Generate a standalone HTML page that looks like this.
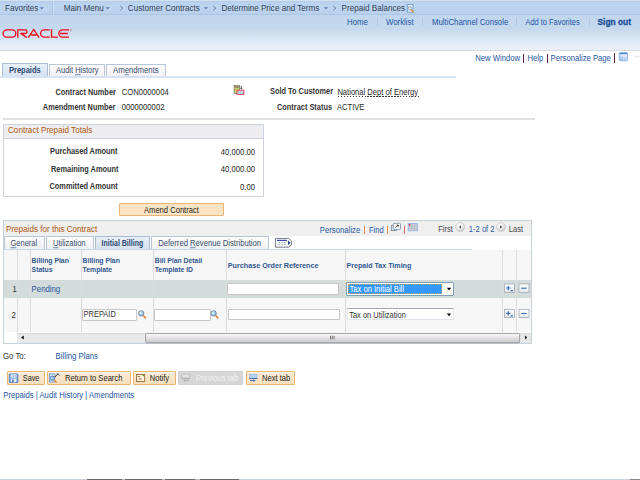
<!DOCTYPE html>
<html><head><meta charset="utf-8">
<style>
html,body{margin:0;padding:0;width:640px;height:480px;overflow:hidden;background:#fff;}
body{font-family:"Liberation Sans",sans-serif;font-size:7.5px;color:#333;position:relative;}
.a{position:absolute;white-space:nowrap;line-height:1;transform:scaleY(1.15);transform-origin:0 84.6%;}.gh{transform:none;}
.b{font-weight:bold;}
u{text-decoration-color:#8194b4;text-decoration-thickness:0.7px;text-underline-offset:1px;}
#topbar{position:absolute;left:0;top:0;width:640px;height:16px;background:linear-gradient(#d3e2f2 0,#d3e2f2 1px,#b4cce8 1px,#b4cce8 2px,#bad2ee 2px,#bdd5ef 7px,#b9d1ec 14px,#abc5e4 14px,#abc5e4 15.5px,#c2d6ee 15.5px,#c2d6ee 16px);}
#hdr{position:absolute;left:0;top:16px;width:640px;height:35px;background:linear-gradient(#c2d6ee 0,#c4d8ee 34%,#cddcee 45%,#d6e4f4 62%,#e2ebf6 80%,#ecf2f9 100%);}
#hdrline{position:absolute;left:0;top:50px;width:640px;height:1px;background:#d6dbe1;}
.bc{color:#33435a;font-size:8.1px;}
.sep{position:absolute;width:1px;background:#a9c0dc;}
.arr{position:absolute;width:0;height:0;border-left:2.5px solid transparent;border-right:2.5px solid transparent;border-top:3px solid #6d8fb6;}
.hl{color:#1d56a4;font-size:7.8px;}
.lnk{color:#2457a2;}
.tab{position:absolute;box-sizing:border-box;border:1px solid #b9c6d6;border-bottom:none;background:linear-gradient(#fdfdfd,#eef0f3);}
.tabon{background:linear-gradient(#e8eff8,#d6e2f0);border-color:#a9bcd2;}
.lbl{color:#333;font-weight:bold;font-size:7.4px;}
.val{color:#262626;font-size:7.6px;}
.gh{color:#31588f;font-weight:bold;font-size:6.85px;line-height:8.8px;}
.vline{position:absolute;width:1px;background:#dcdcdc;}
.inp{position:absolute;box-sizing:border-box;border:1px solid #c6c6c6;background:#fff;border-radius:1px;}
.btn{position:absolute;box-sizing:border-box;border:1px solid #e6b66e;background:linear-gradient(#fdf5ea 0,#fdf5ea 1px,#faead4 1px,#f6dfbd 100%);border-radius:1px;}
</style></head><body>

<!-- top breadcrumb bar -->
<div id="topbar"></div>
<div class="a bc" style="left:5px;top:5.2px;">Favorites</div>
<div class="sep" style="left:52px;top:1px;height:14px;background:#a8bfdc;box-shadow:1px 0 0 #d3e2f3;"></div>
<div class="a bc" style="left:63.8px;top:5.2px;">Main Menu</div>
<div class="a bc" style="left:127.8px;top:5.2px;">Customer Contracts</div>
<div class="a bc" style="left:221.4px;top:5.2px;">Determine Price and Terms</div>
<div class="a bc" style="left:341.6px;top:5.2px;">Prepaid Balances</div>
<svg style="position:absolute;left:0;top:0" width="640" height="16">
<g fill="#5f86b8"><path d="M39.5,7.2 H44 L41.75,9.6 Z"/><path d="M105.5,7.2 H110 L107.75,9.6 Z"/><path d="M203.6,7.2 H208.1 L205.85,9.6 Z"/><path d="M323.6,7.2 H328.1 L325.85,9.6 Z"/></g>
<g fill="none" stroke="#5a6f93" stroke-width="0.9"><path d="M120.3,6 L122.6,8.15 L120.3,10.3"/><path d="M213.4,6 L215.8,8.15 L213.4,10.3"/><path d="M333.4,6 L335.8,8.15 L333.4,10.3"/></g>
<rect x="407.3" y="4.5" width="5.6" height="7.6" fill="#f4f7fb" stroke="#6c98cc" stroke-width="0.9"/>
<circle cx="409.8" cy="8.3" r="1.6" fill="none" stroke="#7a8aa0" stroke-width="0.9"/>
<path d="M411,9.6 L413.6,12.4" stroke="#e08a28" stroke-width="1.3"/>
</svg>

<!-- header -->
<div id="hdr"></div>
<div id="hdrline"></div>
<svg style="position:absolute;left:0;top:0" width="80" height="45" viewBox="0 0 80 45"><g fill="none" stroke="#ec0a1a" stroke-width="1.35" stroke-linecap="butt">
<path d="M6.7,29.9 H12.2 A3.6,3.6 0 0 1 12.2,37.1 H6.7 A3.6,3.6 0 0 1 6.7,29.9 Z"/>
<path d="M17.8,37.7 V29.9 H25.2 A1.8,1.8 0 0 1 25.2,33.5 H20.3 M21,33.6 L26.9,37.5"/>
<path d="M28.3,37.7 L33.7,29.5 L39.1,37.7 M31.2,35 H36.8"/>
<path d="M49.75,29.9 H44.2 A3.6,3.6 0 0 0 44.2,37.1 H49.75"/>
<path d="M51.5,29.3 V37.1 H57.75"/>
<path d="M69,29.9 H62.45 A3.6,3.6 0 0 0 62.45,37.1 H69 M60,33.5 H67.75"/>
</g><circle cx="70.6" cy="30" r="0.8" fill="none" stroke="#ee6066" stroke-width="0.5"/></svg>
<div class="a hl" style="left:347px;top:18.5px;">Home</div>
<div class="sep" style="left:377px;top:18px;height:8px;background:#b3c7de;"></div>
<div class="a hl" style="left:386px;top:18.5px;">Worklist</div>
<div class="sep" style="left:422px;top:18px;height:8px;background:#b3c7de;"></div>
<div class="a hl" style="left:432px;top:18.5px;">MultiChannel Console</div>
<div class="sep" style="left:516px;top:18px;height:8px;background:#b3c7de;"></div>
<div class="a hl" style="left:525.5px;top:18.5px;font-size:7.45px;">Add to Favorites</div>
<div class="sep" style="left:589px;top:18px;height:8px;background:#b3c7de;"></div>
<div class="a hl b" style="left:597.5px;top:18.3px;font-size:8.4px;color:#184a96;-webkit-text-stroke:0.25px #184a96;">Sign out</div>

<!-- page links -->
<div class="a lnk" style="left:475.3px;top:55px;font-size:7.7px;">New Window</div>
<div class="sep" style="left:523.2px;top:53.5px;height:9px;width:1.2px;background:#5e1f48;"></div>
<div class="a lnk" style="left:527.5px;top:55px;font-size:7.7px;">Help</div>
<div class="sep" style="left:546.5px;top:53.5px;height:9px;width:1.2px;background:#5e1f48;"></div>
<div class="a lnk" style="left:550.6px;top:55px;font-size:7.7px;">Personalize Page</div>
<div class="sep" style="left:613.8px;top:52.8px;height:9.8px;width:1.3px;background:#5e1f48;"></div>
<svg style="position:absolute;left:610px;top:48px" width="30" height="18" viewBox="610 48 30 18">
<rect x="619.2" y="52.6" width="8.2" height="8.2" rx="0.9" fill="#e2ecfb" stroke="#7ea6e6" stroke-width="0.8"/>
<rect x="619.4" y="52.9" width="7.8" height="1.2" fill="#4a7fdc"/>
<path d="M620.3,55.2 V60.3 M622.2,56.3 V60.3 M619.6,57.8 H626.8 M619.6,59.5 H626.8" stroke="#86aee8" stroke-width="0.6"/>
<path d="M635.2,56.3 H639.5 M635.4,56.3 V57.3" stroke="#c8c8c8" stroke-width="0.6"/>
</svg>

<!-- tabs -->
<div class="tab tabon" style="left:2px;top:63px;width:45.5px;height:13.5px;"></div>
<div class="a b" style="left:9px;top:66.8px;color:#2c4a72;font-size:7.5px;">Prepaids</div>
<div class="tab" style="left:49px;top:64px;width:56px;height:13px;"></div>
<div class="a" style="left:56px;top:66.5px;color:#3b4f6a;">Audit <u>H</u>istory</div>
<div class="tab" style="left:106px;top:64px;width:59.5px;height:13px;"></div>
<div class="a" style="left:113px;top:66.5px;color:#3b4f6a;font-size:7.75px;">Am<u>e</u>ndments</div>
<div style="position:absolute;left:0;top:76px;width:456px;height:1.5px;background:#d8e3f1;"></div>

<!-- contract info -->
<div class="a lbl" style="left:55.5px;top:89px;">Contract Number</div>
<div class="a val" style="left:121.7px;top:89px;font-size:7.7px;">CON0000004</div>
<div class="a lbl" style="left:42.8px;top:103.5px;">Amendment Number</div>
<div class="a val" style="left:121.7px;top:103.5px;font-size:7.7px;">0000000002</div>
<div class="a lbl" style="left:270px;top:88px;">Sold To Customer</div>
<div class="a val" style="left:337.4px;top:89px;">National Dept of Energy</div>
<div style="position:absolute;left:337.5px;top:96px;width:81px;height:1px;background:repeating-linear-gradient(to right,#333 0,#333 1.5px,transparent 1.5px,transparent 2.95px);"></div>
<div class="a lbl" style="left:277px;top:103.5px;">Contract Status</div>
<div class="a val" style="left:337px;top:103.5px;">ACTIVE</div>
<svg style="position:absolute;left:230px;top:82px" width="18" height="16" viewBox="230 82 18 16"><rect x="234.1" y="85.4" width="5.5" height="8.1" fill="#c9d06c" stroke="#5a5a50" stroke-width="0.6"/><rect x="235" y="85.6" width="3.8" height="2.4" fill="#9a8e78"/><path d="M241.3,86 V88.6 M240.6,88.2 L241.3,89 L242,88.2" stroke="#222" stroke-width="0.8" fill="none"/><rect x="237" y="90.1" width="6.9" height="4.3" fill="#b8d4dc" stroke="#e23a55" stroke-width="0.9"/></svg>
<div style="position:absolute;left:3px;top:118px;width:532px;height:2px;background:#e2e2e2;"></div>

<!-- totals box -->
<div style="position:absolute;left:3px;top:124px;width:261px;height:73px;box-sizing:border-box;border:1px solid #ccd3dc;"></div>
<div style="position:absolute;left:4px;top:125px;width:259px;height:12.5px;background:#ededef;border-bottom:1px solid #c9d0da;"></div>
<div class="a" style="left:8px;top:127px;color:#b0580f;font-size:8.15px;">Contract Prepaid Totals</div>
<div class="a lbl" style="left:50px;top:148px;">Purchased Amount</div>
<div class="a val" style="right:385px;top:148.5px;font-size:7.7px;">40,000.00</div>
<div class="a lbl" style="left:51px;top:165.5px;">Remaining Amount</div>
<div class="a val" style="right:385px;top:166px;font-size:7.7px;">40,000.00</div>
<div class="a lbl" style="left:49.5px;top:183px;">Committed Amount</div>
<div class="a val" style="right:385px;top:183.5px;font-size:7.7px;">0.00</div>

<div class="btn" style="left:119px;top:203px;width:105px;height:13px;background:#fbe4c3;border-color:#e8b57a;"></div>
<div class="a" style="left:144px;top:206.6px;color:#222;font-size:7.6px;">Amend Contract</div>

<!-- grid -->
<div style="position:absolute;left:3px;top:220px;width:529px;height:124px;box-sizing:border-box;border:1px solid #c9d1db;background:#fff;"></div>
<div style="position:absolute;left:4px;top:221px;width:527px;height:14.5px;background:#efefef;"></div>
<div class="a" style="left:6px;top:226px;color:#b0580f;font-size:8.1px;">Prepaids for this Contract</div>
<div class="a lnk" style="left:319.8px;top:226.5px;font-size:7.75px;">Personalize</div>
<div style="position:absolute;left:364px;top:226px;width:1px;height:7.5px;background:#e08d4a;"></div>
<div class="a lnk" style="left:369px;top:226.5px;font-size:7.5px;">Find</div>
<div style="position:absolute;left:387.3px;top:226px;width:1px;height:7.5px;background:#e08d4a;"></div>
<div style="position:absolute;left:404.2px;top:226px;width:1px;height:7.5px;background:#d86a6a;"></div>
<svg style="position:absolute;left:388px;top:220px" width="34" height="14" viewBox="388 220 34 14">
<rect x="391.3" y="225.8" width="5" height="4.8" fill="#e8edf2" stroke="#6c7f98" stroke-width="0.8"/>
<rect x="393.2" y="223.4" width="7.3" height="6" rx="0.8" fill="#fff" stroke="#6f8aaa" stroke-width="0.8"/>
<path d="M395.5,227.8 L398.3,225 M396.6,225 H398.3 V226.7" stroke="#222" stroke-width="0.8" fill="none"/>
<rect x="408.2" y="223.4" width="9.3" height="7.4" fill="#c8cdd4" stroke="#8fb4e8" stroke-width="0.8"/>
<path d="M408.6,226 H417.2 M408.6,228.3 H417.2 M411.5,223.8 V230.5 M414.5,223.8 V230.5" stroke="#b0b6be" stroke-width="0.5"/>
<circle cx="409.6" cy="224.8" r="0.9" fill="#e8283a"/>
</svg>
<div class="a" style="left:438.2px;top:226.4px;color:#4a4a4a;font-size:7.6px;">First</div>
<div class="a lnk" style="left:468.8px;top:226.4px;font-size:7.6px;color:#2f5d9e;">1-2 of 2</div>
<div class="a" style="left:508.7px;top:226.4px;color:#4a4a4a;font-size:7.6px;">Last</div>
<svg style="position:absolute;left:452px;top:219px" width="58" height="16" viewBox="452 219 58 16">
<defs><radialGradient id="rg" cx="0.4" cy="0.35" r="0.7"><stop offset="0" stop-color="#ffffff"/><stop offset="0.6" stop-color="#e6e6e6"/><stop offset="1" stop-color="#bdbdbd"/></radialGradient></defs>
<circle cx="460.2" cy="227" r="4.5" fill="url(#rg)" stroke="#c4c4c4" stroke-width="0.6"/>
<path d="M458.8,227 L461,225.2 V228.8 Z" fill="#555"/>
<circle cx="500.9" cy="227" r="4.5" fill="url(#rg)" stroke="#c4c4c4" stroke-width="0.6"/>
<path d="M502.3,227 L500.1,225.2 V228.8 Z" fill="#555"/>
</svg>

<!-- grid tabs -->
<div class="tab" style="left:4px;top:236px;width:41px;height:13px;"></div>
<div class="a" style="left:10.5px;top:240px;color:#3b4f6a;"><u>G</u>eneral</div>
<div class="tab" style="left:46px;top:236px;width:47.5px;height:13px;"></div>
<div class="a" style="left:53px;top:240px;color:#3b4f6a;"><u>U</u>tilization</div>
<div class="tab tabon" style="left:94.5px;top:236px;width:55px;height:13px;"></div>
<div class="a b" style="left:101.6px;top:240.2px;color:#2c4a72;font-size:7px;transform:scaleY(1.3);">Initial Billing</div>
<div class="tab" style="left:151px;top:236px;width:117.5px;height:13px;"></div>
<div class="a" style="left:158.2px;top:240px;color:#3b4f6a;font-size:7.65px;">Deferred <u>R</u>evenue Distribution</div>
<svg style="position:absolute;left:272px;top:235px" width="24" height="14" viewBox="272 235 24 14">
<path d="M275.4,238.4 H288.6 L291.5,241 V245 L288.6,247.2 H275.4 Z" fill="#f4f8fc" stroke="#5a5f68" stroke-width="0.8"/>
<rect x="277" y="239.8" width="10" height="1.2" fill="#3f48a8"/>
<g fill="#8aa0b8"><rect x="278.7" y="242" width="1.2" height="0.9"/><rect x="281.5" y="242" width="1.2" height="0.9"/><rect x="284.3" y="242" width="1.2" height="0.9"/><rect x="278.7" y="244.2" width="1.2" height="0.9"/><rect x="281.5" y="244.2" width="1.2" height="0.9"/><rect x="284.3" y="244.2" width="1.2" height="0.9"/></g>
<path d="M288,240.4 L290.4,242.7 L288,245 Z" fill="#23348a"/>
</svg>
<div style="position:absolute;left:4px;top:249px;width:468px;height:1px;background:#c8d8ec;"></div>

<!-- column header row -->
<div style="position:absolute;left:4px;top:250px;width:527px;height:30px;background:#f6f6f6;"></div>
<div class="a gh" style="left:31.6px;top:257.2px;">Billing Plan<br>Status</div>
<div class="a gh" style="left:82.6px;top:257.2px;">Billing Plan<br>Template</div>
<div class="a gh" style="left:154.7px;top:257.2px;">Bill Plan Detail<br>Template ID</div>
<div class="a gh" style="left:227.8px;top:261.8px;font-size:7.2px;">Purchase Order Reference</div>
<div class="a gh" style="left:346.5px;top:261.8px;font-size:7.1px;">Prepaid Tax Timing</div>

<!-- row 1 -->
<div style="position:absolute;left:4px;top:280px;width:527px;height:18px;background:#d3dbdb;"></div>
<div class="a" style="left:12.5px;top:286px;color:#333;">1</div>
<div class="a lnk" style="left:31.6px;top:285.7px;font-size:7.8px;color:#2a58a0;">Pending</div>
<div class="inp" style="left:227px;top:283px;width:112px;height:11.5px;"></div>
<div class="inp" style="left:346px;top:282px;width:108px;height:14px;border-color:#7f9db9;"></div>
<div style="position:absolute;left:348.3px;top:284px;width:93.3px;height:9.6px;background:#3399ff;box-sizing:border-box;border:1px dotted #d8a070;"></div>
<div class="a" style="left:349.5px;top:285.5px;color:#fff;font-size:7.6px;">Tax on Initial Bill</div>

<!-- row 2 -->
<div style="position:absolute;left:4px;top:298px;width:527px;height:34px;background:#f7f7f7;"></div>
<div class="a" style="left:11.6px;top:312.2px;color:#333;font-size:8px;">2</div>
<div class="inp" style="left:82.2px;top:308.8px;width:55.3px;height:12px;"></div>
<div class="a" style="left:83.5px;top:311.3px;color:#333;">PREPAID</div>
<div class="inp" style="left:154.2px;top:308.8px;width:56.5px;height:12px;"></div>
<div class="inp" style="left:227.5px;top:309px;width:112px;height:11.2px;"></div>
<div class="inp" style="left:346.7px;top:308.2px;width:107.2px;height:12.2px;border-color:#e2e5ec;border-top-color:#a4a8b0;"></div>
<div class="a" style="left:349.2px;top:312.2px;color:#333;">Tax on Utilization</div>

<!-- vertical lines -->
<div class="vline" style="left:17px;top:250px;height:82px;"></div>
<div class="vline" style="left:30px;top:250px;height:82px;"></div>
<div class="vline" style="left:81px;top:250px;height:82px;"></div>
<div class="vline" style="left:153px;top:250px;height:82px;"></div>
<div class="vline" style="left:226px;top:250px;height:82px;"></div>
<div class="vline" style="left:345px;top:250px;height:82px;"></div>
<div class="vline" style="left:502px;top:250px;height:82px;"></div>
<div class="vline" style="left:516px;top:250px;height:82px;"></div>

<svg style="position:absolute;left:0;top:276px" width="540" height="70" viewBox="0 276 540 70">
<defs><radialGradient id="mg" cx="0.35" cy="0.35" r="0.7"><stop offset="0" stop-color="#e4f4ff"/><stop offset="1" stop-color="#6aaee8"/></radialGradient>
<linearGradient id="thumb" x1="0" y1="0" x2="0" y2="1"><stop offset="0" stop-color="#fafafa"/><stop offset="0.5" stop-color="#e2e2e4"/><stop offset="1" stop-color="#c6c6c6"/></linearGradient>
<linearGradient id="pb" x1="0" y1="0" x2="0" y2="1"><stop offset="0" stop-color="#ffffff"/><stop offset="1" stop-color="#e4e8ee"/></linearGradient></defs>
<!-- dropdown arrows -->
<path d="M446.8,287.8 H451.2 L449,290.4 Z" fill="#000"/>
<path d="M446.8,313.6 H451.2 L449,316.2 Z" fill="#000"/>
<!-- magnifiers -->
<g><circle cx="141.2" cy="313.4" r="2.7" fill="url(#mg)" stroke="#707070" stroke-width="0.7"/><path d="M143.2,315.5 L145.9,318.4" stroke="#e08a40" stroke-width="1.6"/></g>
<g><circle cx="213.6" cy="313.4" r="2.7" fill="url(#mg)" stroke="#707070" stroke-width="0.7"/><path d="M215.6,315.5 L218.3,318.4" stroke="#e08a40" stroke-width="1.6"/></g>
<!-- plus/minus buttons -->
<g>
<rect x="504.5" y="284" width="10" height="8.3" fill="url(#pb)" stroke="#9aa4b0" stroke-width="0.7"/>
<path d="M506.2,288 H510.4 M508.3,285.9 V290.2 M510.6,290.6 H512.8" stroke="#3a6db0" stroke-width="1.2"/>
<rect x="519" y="284" width="10" height="8.3" fill="url(#pb)" stroke="#9aa4b0" stroke-width="0.7"/>
<path d="M521.2,288.2 H526.6" stroke="#3a6db0" stroke-width="1.1"/>
<rect x="504.5" y="309.3" width="10" height="8.3" fill="url(#pb)" stroke="#9aa4b0" stroke-width="0.7"/>
<path d="M506.2,313.3 H510.4 M508.3,311.2 V315.5 M510.6,315.9 H512.8" stroke="#3a6db0" stroke-width="1.2"/>
<rect x="519" y="309.3" width="10" height="8.3" fill="url(#pb)" stroke="#9aa4b0" stroke-width="0.7"/>
<path d="M521.2,313.5 H526.6" stroke="#3a6db0" stroke-width="1.1"/>
</g>
<!-- scrollbar -->
<rect x="17" y="333" width="514" height="10" fill="#e8e8e8"/>
<rect x="17" y="333" width="514" height="0.8" fill="#d6d6d6"/>
<path d="M21,337.5 L23.8,335.6 V339.4 Z" fill="#111"/>
<rect x="145.6" y="333.4" width="374" height="9.4" rx="1" fill="url(#thumb)" stroke="#8c8c8c" stroke-width="0.8"/>
<path d="M330.5,335.8 V339.3 M332.3,335.8 V339.3 M334.1,335.8 V339.3" stroke="#444" stroke-width="0.7"/>
<path d="M527.2,337.5 L525,335.6 V339.4 Z" fill="#111"/>
</svg>

<!-- bottom -->
<div class="a" style="left:3px;top:352.5px;color:#333;font-size:7.8px;">Go To:</div>
<div class="a lnk" style="left:55.5px;top:352.5px;font-size:7.8px;">Billing Plans</div>

<div class="btn" style="left:7px;top:371px;width:38px;height:14px;"></div>
<div class="a" style="left:22.8px;top:375px;color:#222;font-size:7.25px;">Save</div>
<div class="btn" style="left:47px;top:371px;width:84px;height:14px;"></div>
<div class="a" style="left:65px;top:375px;color:#222;font-size:7.6px;">Return to Search</div>
<div class="btn" style="left:133px;top:371px;width:43px;height:14px;"></div>
<div class="a" style="left:149.75px;top:375px;color:#222;font-size:7.6px;">Notify</div>
<div class="btn" style="left:178px;top:371px;width:65px;height:14px;background:#d6d6d6;border-color:#d0d0d0;"></div>
<div class="a" style="left:196px;top:375px;color:#f4f4f4;font-size:7.6px;">Previous tab</div>
<div class="btn" style="left:246px;top:371px;width:49px;height:14px;"></div>
<div class="a" style="left:262px;top:375px;color:#222;font-size:7.6px;">Next tab</div>

<div class="a lnk" style="left:3.3px;top:392px;font-size:7.7px;">Prepaids | Audit History | Amendments</div>
<svg style="position:absolute;left:0;top:368px" width="300" height="20" viewBox="0 368 300 20">
<defs><linearGradient id="fl" x1="0" y1="0" x2="1" y2="1"><stop offset="0" stop-color="#dbeafa"/><stop offset="1" stop-color="#7aa6dc"/></linearGradient></defs>
<!-- save floppy -->
<rect x="9.3" y="373.9" width="8.6" height="8.5" rx="0.5" fill="#8db4e6" stroke="#3f6fb8" stroke-width="0.8"/>
<rect x="10.9" y="374.2" width="5.4" height="3.4" fill="#ffffff"/>
<path d="M12,374.3 V377.4 M13.6,374.3 V377.4 M15.2,374.3 V377.4" stroke="#5a88c8" stroke-width="0.6"/>
<rect x="11.2" y="378.9" width="5" height="3.3" fill="#e8f0fa"/>
<rect x="12.2" y="379.5" width="1.4" height="2.6" fill="#2d5aa0"/>
<!-- return to search -->
<rect x="49.3" y="373.8" width="5.6" height="8.2" fill="#cfe0f6" stroke="#5f88c8" stroke-width="0.7"/>
<circle cx="52.3" cy="378.2" r="2.1" fill="#a8cdf0" stroke="#3d5f98" stroke-width="0.7"/>
<path d="M53.8,379.8 L56.6,382.6" stroke="#e0882c" stroke-width="1.3"/>
<path d="M54.6,377.2 L57.6,374.2" stroke="#111" stroke-width="0.9"/>
<path d="M56.4,373.4 H58.6 V375.6 Z" fill="#1c3f90"/>
<path d="M58.8,374.6 L60.2,376" stroke="#444" stroke-width="0.6"/>
<!-- notify -->
<rect x="136.4" y="374.4" width="8.3" height="7" fill="#fff6e0" stroke="#8a5a28" stroke-width="0.8"/>
<path d="M137.8,376.6 H140.2 M138.6,379 H141.8" stroke="#8a5a28" stroke-width="0.9"/>
<circle cx="143.3" cy="375.6" r="0.8" fill="#3cb030"/>
<!-- previous tab (disabled) -->
<rect x="182" y="374.2" width="7.4" height="3.8" fill="#e4e4e4" stroke="#b8b8b8" stroke-width="0.6"/>
<path d="M181.6,378.6 H189.8 M188.6,380.6 H184 M185.2,379.4 L184,380.6 L185.2,381.8" stroke="#9c9c9c" stroke-width="0.7" fill="none"/>
<!-- next tab -->
<rect x="249.6" y="374.2" width="7.4" height="3.8" fill="#b8d4f2" stroke="#8ab0e0" stroke-width="0.6"/>
<path d="M249.2,378.6 H257.6 M250,380.6 H254.8 M253.6,379.4 L254.8,380.6 L253.6,381.8" stroke="#1f4d9c" stroke-width="0.8" fill="none"/>
</svg>

<div style="position:absolute;left:0;top:479px;width:640px;height:1px;background:linear-gradient(to right,#c9d2da 0,#c9d2da 87px,#6a6a6a 87px,#6a6a6a 122px,#b8bcc0 122px,#b8bcc0 125px,#6a6a6a 125px,#6a6a6a 162px,#b8bcc0 162px,#b8bcc0 165px,#6a6a6a 165px,#6a6a6a 195px,#b8bcc0 195px,#b8bcc0 200px,#6a6a6a 200px,#6a6a6a 239px,#c9d2da 239px,#c9d2da 630px,#888 630px);"></div>
</body></html>
